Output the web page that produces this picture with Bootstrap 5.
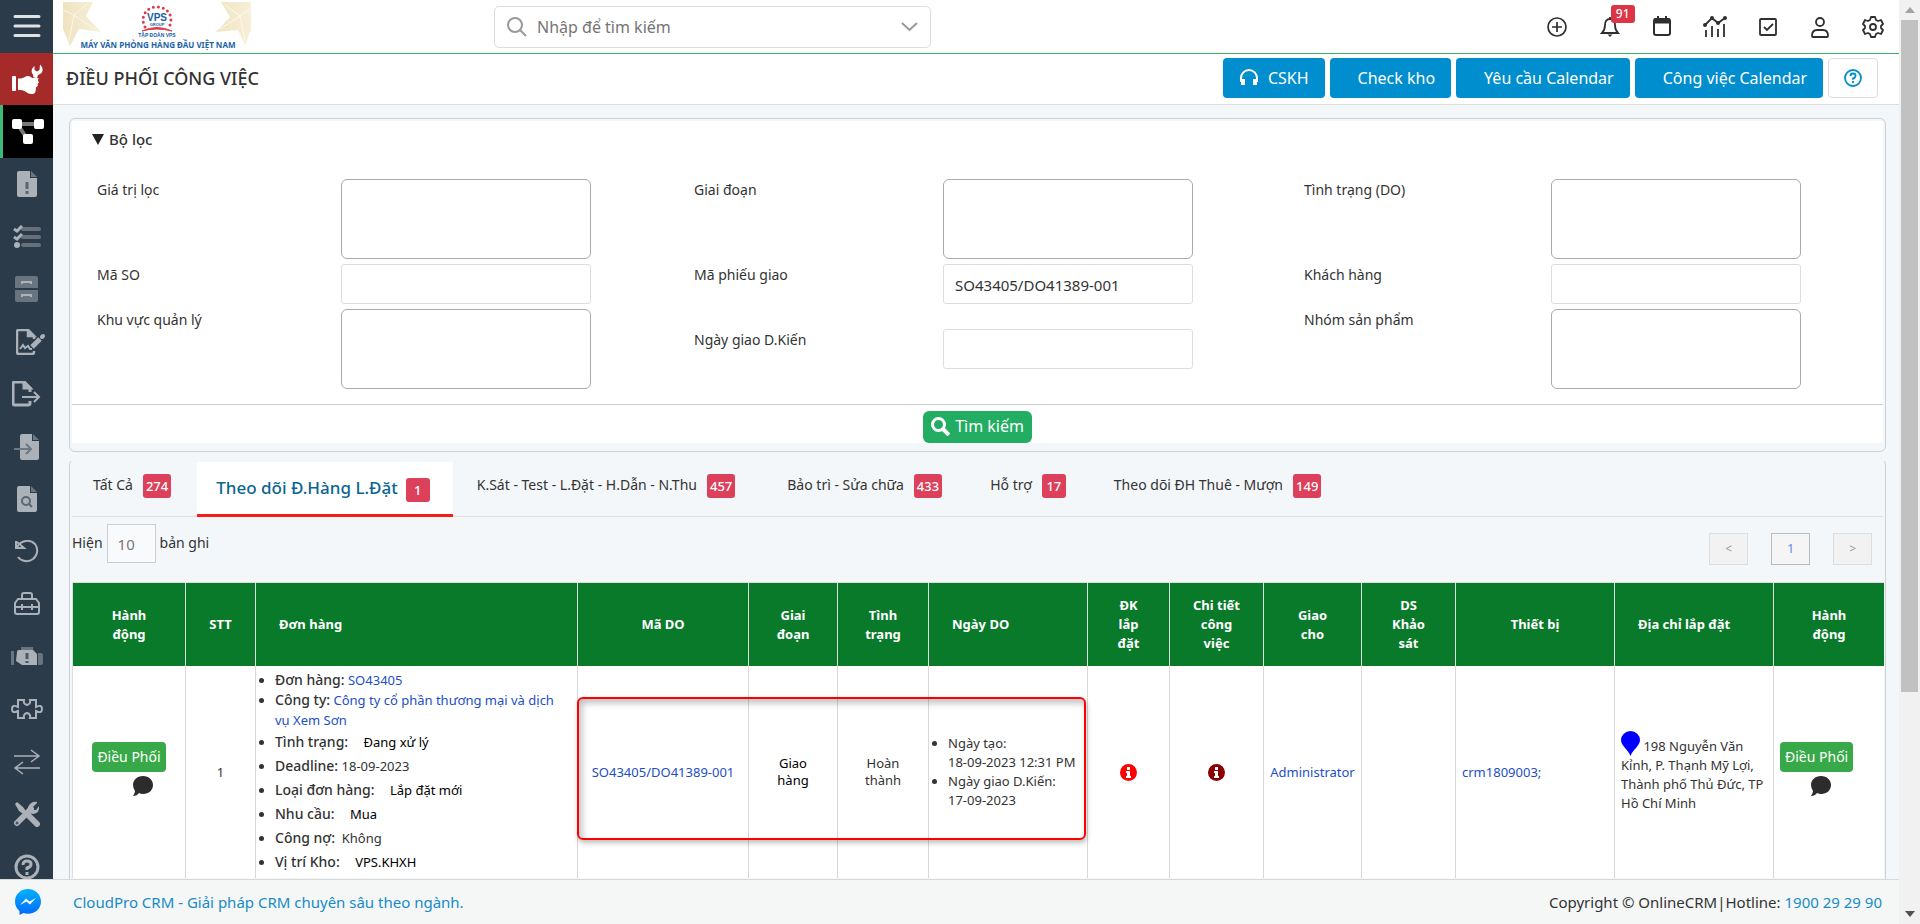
<!DOCTYPE html>
<html lang="vi">
<head>
<meta charset="utf-8">
<meta name="viewport" content="width=device-width, initial-scale=1">
<title>Điều phối công việc</title>
<link href="https://cdn.jsdelivr.net/npm/bootstrap@5.3.0/dist/css/bootstrap.min.css" rel="stylesheet">
<style>
  body { font-family: "Noto Sans", "Open Sans", sans-serif; font-size: 14px; line-height: 20px; color: #333; background: #f3f7fa; overflow: hidden; }
  a { text-decoration: none; }
  svg { display: block; flex: none; }
  .min-0 { min-width: 0; min-height: 0; }

  /* left menu */
  .side { width: 53px; background: #2c3b49; color: #abb1b8; overflow: hidden; }
  .side a, .side button { flex: none; height: 52px; margin-bottom: 1px; display: flex; align-items: center; justify-content: center; color: inherit; background: none; border: 0; padding: 0; }
  .side a:nth-of-type(even) { margin-bottom: 0; }
  .side .is-module { background: #a52a2a; color: #fff; margin-bottom: 0; }
  .side .is-current { background: #000; color: #fff; border-left: 3px solid #3cb878; height: 53px; }

  /* top bars */
  .topbar { height: 54px; background: #fff; border-bottom: 1px solid #3cb371; padding: 0 12px 0 10px; }
  .logo-box { width: 431px; }
  .search-box { width: 437px; height: 42px; border: 1px solid #ddd; border-radius: 5px; color: #999; padding: 0 12px; }
  .search-box input { border: 0; outline: 0; font-size: 16px; color: #757575; min-width: 0; background: none; }
  .search-box input::placeholder { color: #757575; }
  .top-icons { width: 344px; color: #2f2f2f; }
  .top-icons button { border: 0; padding: 0; background: none; color: inherit; width: 28px; height: 28px; display: flex; align-items: center; justify-content: center; position: relative; }
  .bell-count { position: absolute; left: 15px; top: -8px; width: 24px; height: 18px; border-radius: 3px; background: #dc3545; color: #fff; font-size: 12px; line-height: 18px; font-weight: 500; }
  .titlebar { height: 51px; background: #fff; border-bottom: 1px solid #ddd; padding: 0 21px 2px 13px; }
  .titlebar h1 { font-size: 18px; line-height: 24px; font-weight: 500; margin: 0; }
  .tool-row { gap: 5px; }
  .btn-tool { height: 40px; background: #008ecf; color: #fff; border: 0; border-radius: 4px; font-size: 16px; line-height: 24px; padding: 0 16px; display: flex; align-items: center; gap: 9px; }
  .btn-tool.no-icon { padding-left: 28px; }
  .btn-help { width: 50px; height: 40px; background: #fff; border: 1px solid #ddd; border-radius: 4px; color: #008ecf; display: flex; align-items: center; justify-content: center; padding: 0; }

  /* panels */
  .content-area { padding: 13px 13px 0 16px; }
  .panel { border: 1px solid #ccd1d4; border-radius: 6px; background: #f3f7fa; padding: 2px; }
  .filter-panel { padding-bottom: 8px; }
  .filter-body { background: #fff; }
  .filter-body summary { font-size: 15px; line-height: 20px; font-weight: 500; padding: 8px 0 10px 20px; list-style: none; display: flex; align-items: center; gap: 5px; }
  .filter-grid { display: grid; grid-template-columns: 244fr 353fr 249fr 361fr 247fr 332fr; grid-template-rows: 85px 45px 80px; padding: 20px 0 15px 25px; }
  .filter-grid label { padding-top: 1px; }
  .filter-grid input { width: 250px; height: 40px; border: 1px solid #ddd; border-radius: 3px; font-size: 15px; color: #333; padding: 2px 11px 0; }
  .filter-grid textarea { width: 250px; height: 80px; border: 1px solid #aaa; border-radius: 6px; resize: none; display: block; }
  .filter-grid .mid { margin-top: 20px; }
  .filter-foot { border-top: 1px solid #ccc; padding-top: 6px; }
  .btn-find { height: 32px; background: #22ad62; color: #fff; border: 0; border-radius: 6px; font-size: 16px; line-height: 24px; padding: 0 8px 2px; display: flex; align-items: center; gap: 5px; }

  /* list panel */
  .list-panel { margin-top: 7px; border-bottom: 0; border-radius: 6px 6px 0 0; border-top-color: #f3f7fa; }
  .tab-row { border-bottom: 1px solid #ddd; height: 55px; padding-left: 21px; }
  .tab-row a { color: #333; display: flex; gap: 10px; padding: 12px 0 0; height: 55px; line-height: 22px; margin-right: 48px; }
  .tab-row a:first-child { margin-right: 26px; }
  .tab-row a.on { background: #fff; border-bottom: 3px solid #fb1a1a; color: #0b6592; font-weight: 500; font-size: 17px; line-height: 28px; padding: 12px 23px 0 19px; margin-right: 24px; gap: 8px; }
  .tab-row a:nth-child(3) { margin-right: 52px; }
  .tab-count { flex: none; height: 24px; min-width: 24px; padding: 0 3px; border-radius: 3px; background: #dc405b; color: #fff; font-size: 13px; line-height: 24px; font-weight: 500; text-align: center; }
  .on .tab-count { margin-top: 4px; }
  .list-tools { height: 65px; padding-bottom: 1px; }
  .page-size { width: 49px; height: 39px; border: 1px solid #ccc; background: #f9fafb; font-size: 15px; color: #777; padding: 2px 10px 0; }
  .pager { gap: 23px; padding-right: 11px; }
  .pager button { width: 39px; height: 32px; border: 1px solid #ddd; background: #f2f2f2; color: #999; font-size: 12px; line-height: 18px; padding: 0; }
  .pager button.now { border-color: #bbb; background: #f5f5f5; color: #5c86ee; }

  .jobs { width: 100%; table-layout: fixed; border-collapse: separate; border-spacing: 0; font-size: 13px; line-height: 19px; background: #fff; border-left: 1px solid #ddd; }
  .jobs th { background: #09792a; color: #fff; font-weight: 700; text-align: center; height: 84px; padding: 0 16px; border-right: 1px solid #ddd; border-top: 1px solid #ddd; line-height: 19px; }
  .jobs th.start { text-align: left; padding-left: 23px; }
  .jobs td { height: 212px; border-right: 1px solid #d8d8d8; text-align: center; vertical-align: middle; padding: 0 9px; }
  .jobs th:last-child, .jobs td:last-child { border-right: 0; }
  .jobs td.start { text-align: left; padding: 0 6px; }
  .jobs td.bullets { text-align: left; padding: 0 0 0 1px; }
  .jobs a { color: #1c4fc4; }
  .jobs .ink { color: #000; line-height: 17px; }
  .jobs ul { padding-left: 18px; margin: 0; }
  .jobs .narrow { line-height: 17px; }
  .jobs .order-list { padding-right: 20px; }
  .order-list b { font-weight: 500; font-size: 14px; }
  .order-list li { line-height: 20px; padding: 2px 0; }
  .order-list li.tight { padding: 0; }
  .order-list .gap { margin-left: 12px; color: #000; }
  .btn-job { display: block; background: #38a948; color: #fff; border: 0; border-radius: 4px; height: 30px; font-size: 14px; line-height: 20px; padding: 0 5px; white-space: nowrap; }
  .job-note { margin: 4px auto 6px; }
  .marker { left: 27.9%; width: 28.1%; top: 115px; height: 143px; border: 2px solid #f00; border-radius: 6px; box-shadow: 1px 3px 5px rgba(0,0,0,.25), inset 3px 4px 7px rgba(0,0,0,.25); pointer-events: none; }

  .foot { height: 45px; flex: none; background: #f5f7f7; border-top: 1px solid #d8d9da; font-size: 15px; padding: 0 17px 0 15px; }
  .foot a { color: #178bc6; }

  /* page scroll bar */
  .bar { width: 21px; flex: none; background: #f1f1f1; padding: 0 2px; }
  .bar-end { height: 20px; }
  .bar-thumb { background: #c1c1c1; flex: 0 0 76%; }
</style>
</head>
<body class="d-flex vh-100">
<div class="d-flex flex-column flex-grow-1 min-0">
  <div class="d-flex flex-grow-1 min-0">

    <nav class="side d-flex flex-column flex-shrink-0" aria-label="Menu">
      <button type="button" aria-label="Mở menu"><svg width="28" height="24" stroke="#dfe2e5" stroke-width="3" stroke-linecap="round"><path d="M2 2.500h24M2 12h24M2 21.500h24"/></svg></button>
      <a href="#" class="is-module" aria-label="Dịch vụ"><svg width="32" height="32" viewBox="0 0 32 32" fill="currentColor"><rect x="1" y="13" width="4" height="15" rx="1"/><path d="M7 15.500h2c4 0 5-2.500 8-2.500 2 0 3 1 4 2h6.500l-.5 3 1 1-1.500 2.500.5 1-2 2-.5 4c-.5 2-2 2.500-4 2.500-5 0-6-4-11-4H7z"/><path d="M22.500 14.500l-.5-3c-2-2-2-6 1.500-8.500V7l2.500 1.500L28.500 7 29 1.500c3 2.500 3.500 6.500 1 9l-3 1.500-1 3z"/></svg></a>
      <a href="#" class="is-current" aria-label="Điều phối"><svg width="32" height="26" viewBox="0 0 32 26"><path d="M5 5h22M6 6l10 15" stroke="#777" stroke-width="4"/><rect x="0" y="0" width="10" height="10" rx="2" fill="#fff"/><rect x="22" y="0" width="10" height="10" rx="2" fill="#fff"/><rect x="11" y="15" width="10" height="10" rx="2" fill="#fff"/></svg></a>
      <a href="#" aria-label="Cảnh báo"><svg width="20" height="26" viewBox="0 0 20 26" fill="currentColor"><path d="M2 0h11v7h7v17q0 2-2 2H2q-2 0-2-2V2q0-2 2-2z"/><path d="M14 0l6 6h-6z" opacity=".5"/><path d="M10 11v7M10 20v3" stroke="#5b6671" stroke-width="3"/></svg></a>
      <a href="#" aria-label="Danh sách"><svg width="28" height="24" viewBox="0 0 28 24" fill="none" stroke="currentColor"><path d="M10 4h16M10 12h16M10 20h16" stroke-width="4" stroke-linecap="round" opacity=".45"/><path d="M1 4l3 2 5-5M1 12l3 2 5-5" stroke-width="3"/><circle cx="4" cy="20" r="3" fill="currentColor" stroke="none"/></svg></a>
      <a href="#" aria-label="Kho"><svg width="23" height="26" viewBox="0 0 23 26"><path d="M2 0h19q2 0 2 2v10H0V2q0-2 2-2zM0 14h23v10q0 2-2 2H2q-2 0-2-2z" fill="#68747f"/><path d="M7 8V6h9v2M7 21v-2h9v2" fill="none" stroke="currentColor" stroke-width="2"/></svg></a>
      <a href="#" aria-label="Hợp đồng"><svg class="ms-2" width="29" height="26" viewBox="0 0 29 26" fill="none" stroke="currentColor" stroke-width="2.500"><path d="M18 22v1q0 2-2 2H3q-2 0-2-2V3q0-2 2-2h9l6 6v3"/><path d="M12 1v6h6z" fill="currentColor"/><path d="M4 20l3-4 2 3 3-2 2 3h2" stroke-width="2"/><path d="M16 18L24 10" stroke-width="5"/><path d="M26 8l1-1" stroke-width="4" stroke-linecap="round"/></svg></a>
      <a href="#" aria-label="Xuất"><svg width="29" height="26" viewBox="0 0 29 26" fill="none" stroke="currentColor" stroke-width="3"><path d="M18 20v2q0 2-2 2H3q-2 0-2-2V3q0-2 2-2h9l6 6v4"/><path d="M12 1v6h6z" fill="currentColor"/><path d="M10 16h17M22 11l5 5-5 5" stroke-width="2"/></svg></a>
      <a href="#" aria-label="Nhập"><svg width="27" height="26" viewBox="0 0 27 26"><path d="M9 0h10v7h7v17q0 2-2 2H9q-2 0-2-2V2q0-2 2-2z" fill="currentColor"/><path d="M20 0l6 6h-6z" fill="currentColor" opacity=".5"/><path d="M1 15h17M13 10l5 5-5 5" fill="none" stroke="#6c7781" stroke-width="2"/></svg></a>
      <a href="#" aria-label="Tra cứu"><svg width="20" height="26" viewBox="0 0 20 26"><path d="M2 0h11v7h7v17q0 2-2 2H2q-2 0-2-2V2q0-2 2-2z" fill="currentColor"/><path d="M14 0l6 6h-6z" fill="currentColor" opacity=".5"/><circle cx="9" cy="15" r="4" fill="none" stroke="#5b6671" stroke-width="2"/><path d="M12 18l3 3" stroke="#5b6671" stroke-width="2"/></svg></a>
      <a href="#" aria-label="Thu hồi"><svg width="24" height="24" viewBox="0 0 24 24" fill="none" stroke="currentColor" stroke-width="2"><path d="M2 7C6 0 15-1 20 4a10.500 10.500 0 0 1-17 13M1 1v7h8L2 2"/></svg></a>
      <a href="#" aria-label="Công cụ"><svg width="26" height="24" viewBox="0 0 26 24" fill="none" stroke="currentColor" stroke-width="2"><path d="M4 7h18l3 4v9q0 2-2 2H3q-2 0-2-2v-9zM8 7V3q0-2 2-2h6q2 0 2 2v4M1 15h24M8 12v6M18 12v6"/></svg></a>
      <a href="#" aria-label="Máy móc"><svg width="32" height="20" viewBox="0 0 32 20"><path d="M0 4h3v14H0zM27 6h3q2 0 2 2v8q0 2-2 2h-3zM10 0h12v3H10z" fill="#68747f"/><path d="M6 5q0-2 2-2h14l4 4v11H11l-6-4z" fill="currentColor"/><path d="M16 6v6M16 14v2" stroke="#4c5864" stroke-width="3"/></svg></a>
      <a href="#" aria-label="Tiện ích"><svg width="32" height="20" viewBox="0 0 32 20" fill="none" stroke="currentColor" stroke-width="2"><path d="M7 8V1h6q-1 4 3 5 4-1 3-5h6v7q6-3 6 2t-6 2v7h-6q1-4-3-5-4 1-3 5H7v-7q-6 3-6-2t6-2z"/></svg></a>
      <a href="#" aria-label="Chuyển đổi"><svg width="28" height="26" viewBox="0 0 28 26" fill="none" stroke="currentColor" stroke-width="1.500"><path d="M1 7h25M18 1l8 6-8 6M27 19H2M10 13l-8 6 8 6"/></svg></a>
      <a href="#" aria-label="Sửa chữa"><svg width="27" height="26" viewBox="0 0 27 26" fill="none" stroke="currentColor"><path d="M4 22L18 8" stroke-width="6" stroke-linecap="round"/><path d="M24 2l-4 4 0 3 3 0 3-4q1 7-6 8-7-1-5-7 3-6 9-5z" fill="currentColor" stroke="none"/><path d="M2 3l2-2 6 5 5 7-2 2-7-5z" fill="currentColor" stroke="none"/><path d="M16 15l8 8" stroke-width="6" stroke-linecap="round"/><circle cx="4" cy="22" r="1" stroke="#2c3b49"/></svg></a>
      <a href="#" aria-label="Trợ giúp"><svg width="26" height="26" viewBox="0 0 26 26" fill="none" stroke="currentColor" stroke-width="3"><circle cx="13" cy="13" r="11"/><path d="M9 11q0-4 4-4t4 3-4 4v2M13 18v3"/></svg></a>
    </nav>

    <div class="d-flex flex-column flex-grow-1 min-0">
      <header class="topbar d-flex align-items-center flex-shrink-0">
        <a href="#" class="logo-box flex-shrink-1" aria-label="Tập đoàn VPS">
          <svg width="190" height="50" viewBox="0 0 190 50">
            <defs><linearGradient id="gold"><stop offset="0" stop-color="#efe3c0"/><stop offset="1" stop-color="#f7efd8"/></linearGradient></defs>
            <path d="M0 0h30l-7 14 15 16-22-3-9 17L0 27z" fill="url(#gold)"/><path d="M11 13L24 2M11 13l22 15M11 13L0 8M11 13L6 38" stroke="#fbf7ea" stroke-width="1"/>
            <path d="M158 0h30v28l-6 15-7-15-22 2 14-15z" fill="url(#gold)"/><path d="M177 14L162 3M177 14l-20 13M177 14l11-8M177 14l5 26" stroke="#fdfaf0" stroke-width="1"/>
            <path d="M82 25c-5-9 0-20 12-20s17 11 12 20" fill="none" stroke="#dc3a4a" stroke-width="3" stroke-linecap="round" stroke-dasharray="0 5"/>
            <text x="94" y="19" text-anchor="middle" font-family="Liberation Sans, sans-serif" font-weight="700" font-size="10" fill="#155fa6">VPS</text>
            <text x="94" y="24" text-anchor="middle" font-family="Liberation Sans, sans-serif" font-weight="700" font-size="4" fill="#155fa6">GROUP</text>
            <path d="M79 29q15-7 30 0-15-4-30 0z" fill="#dc3a4a" stroke="#dc3a4a"/>
            <text x="94" y="35" text-anchor="middle" font-family="Liberation Sans, sans-serif" font-weight="700" font-size="5" fill="#155fa6">TẬP ĐOÀN VPS</text>
            <text x="95" y="46" text-anchor="middle" font-family="Noto Sans, sans-serif" font-weight="700" font-size="8" fill="#1a63a5">MÁY VĂN PHÒNG HÀNG ĐẦU VIỆT NAM</text>
          </svg>
        </a>
        <div class="search-box d-flex align-items-center gap-2 me-auto">
          <svg width="20" height="20" viewBox="0 0 20 20" fill="none" stroke="currentColor" stroke-width="2"><circle cx="8" cy="8" r="7"/><path d="M13 13l6 6"/></svg>
          <input type="search" class="flex-grow-1" placeholder="Nhập để tìm kiếm" aria-label="Nhập để tìm kiếm">
          <svg width="17" height="10" viewBox="0 0 17 10" fill="none" stroke="currentColor" stroke-width="2"><path d="M1 1l7.500 7L16 1"/></svg>
        </div>
        <div class="top-icons d-flex justify-content-between">
          <button type="button" aria-label="Thêm"><svg width="20" height="20" viewBox="0 0 20 20" fill="none" stroke="currentColor" stroke-width="1.700"><circle cx="10" cy="10" r="9"/><path d="M10 5v10M5 10h10"/></svg></button>
          <button type="button" aria-label="Thông báo"><svg width="20" height="20" viewBox="0 0 20 20" fill="none" stroke="currentColor" stroke-width="1.800"><path d="M2 16q3-3 3-8 0-6 5-6t5 6q0 5 3 8zM10 0v2"/><path d="M7.500 17.500h5L10 20z" fill="currentColor" stroke="none"/></svg><span class="bell-count">91</span></button>
          <button type="button" aria-label="Lịch"><svg width="20" height="21" viewBox="0 0 20 21" fill="none" stroke="currentColor" stroke-width="2"><rect x="2" y="3" width="16" height="16" rx="2"/><path d="M2 5h16" stroke-width="5"/><path d="M6 0v5M14 0v5"/></svg></button>
          <button type="button" aria-label="Báo cáo"><svg width="24" height="22" viewBox="0 0 24 22" fill="none" stroke="currentColor" stroke-width="1.800"><path d="M2 9l7-7 6 5 7-5M3 14v7M9 10v11M15 13v8M21 8v13"/><g fill="currentColor" stroke="none"><circle cx="2" cy="9" r="2"/><circle cx="9" cy="2" r="2"/><circle cx="15" cy="7" r="2"/><circle cx="22" cy="2" r="2"/></g></svg></button>
          <button type="button" aria-label="Công việc"><svg width="20" height="20" viewBox="0 0 20 20" fill="none" stroke="currentColor" stroke-width="1.800"><rect x="2" y="2" width="16" height="16" rx="1"/><path d="M6 10l3 3 6-6"/></svg></button>
          <button type="button" aria-label="Tài khoản"><svg width="20" height="22" viewBox="0 0 20 22" fill="none" stroke="currentColor" stroke-width="1.800"><circle cx="10" cy="6" r="4"/><path d="M2 20q0-6 5-6h6q5 0 5 6 0 1-1 1H3q-1 0-1-1z"/></svg></button>
          <button type="button" aria-label="Cài đặt"><svg width="22" height="22" viewBox="0 0 22 22" fill="none" stroke="currentColor" stroke-width="1.800" stroke-linejoin="round"><path d="M9 1h4l1 3 2 1 3-1 2 4-2 2v2l2 2-2 4-3-1-2 1-1 3H9l-1-3-2-1-3 1-2-4 2-2v-2L1 8l2-4 3 1 2-1z"/><circle cx="11" cy="11" r="3"/></svg></button>
        </div>
      </header>

      <div class="titlebar d-flex align-items-center justify-content-between flex-shrink-0">
        <h1>ĐIỀU PHỐI CÔNG VIỆC</h1>
        <div class="tool-row d-flex">
          <button type="button" class="btn-tool"><svg width="20" height="18" viewBox="0 0 20 18" fill="none" stroke="currentColor" stroke-width="2"><path d="M2 13V9a8 8 0 0 1 16 0v4"/><path d="M4 10v6M16 10v6" stroke-width="4"/></svg>CSKH</button>
          <button type="button" class="btn-tool no-icon">Check kho</button>
          <button type="button" class="btn-tool no-icon">Yêu cầu Calendar</button>
          <button type="button" class="btn-tool no-icon">Công việc Calendar</button>
          <button type="button" class="btn-help" aria-label="Trợ giúp"><svg width="18" height="18" viewBox="0 0 18 18" fill="none" stroke="currentColor" stroke-width="1.800"><circle cx="9" cy="9" r="8"/><path d="M6.500 7q0-2.500 2.500-2.500t2.500 2.200-2.500 2.800v1.200M9 12v2"/></svg></button>
        </div>
      </div>

      <main class="content-area flex-grow-1 min-0 overflow-hidden">
        <section class="panel filter-panel">
          <details class="filter-body" open>
            <summary><svg width="12" height="11"><path d="M0 0h12L6 11z" fill="#222"/></svg>Bộ lọc</summary>
            <form>
              <div class="filter-grid">
                <label for="f1">Giá trị lọc</label><div><textarea id="f1"></textarea></div>
                <label for="f2">Giai đoạn</label><div><textarea id="f2"></textarea></div>
                <label for="f3">Tình trạng (DO)</label><div><textarea id="f3"></textarea></div>
                <label for="f4">Mã SO</label><div><input id="f4" type="text"></div>
                <label for="f5">Mã phiếu giao</label><div><input id="f5" type="text" value="SO43405/DO41389-001"></div>
                <label for="f6">Khách hàng</label><div><input id="f6" type="text"></div>
                <label for="f7">Khu vực quản lý</label><div><textarea id="f7"></textarea></div>
                <label for="f8" class="mid">Ngày giao D.Kiến</label><div class="mid"><input id="f8" type="text"></div>
                <label for="f9">Nhóm sản phẩm</label><div><textarea id="f9"></textarea></div>
              </div>
              <div class="filter-foot d-flex justify-content-center">
                <button type="button" class="btn-find"><svg width="19" height="19" viewBox="0 0 19 19" fill="none" stroke="currentColor" stroke-width="3"><circle cx="7.500" cy="7.500" r="6"/><path d="M12 12l6 6" stroke-width="4"/></svg>Tìm kiếm</button>
              </div>
            </form>
          </details>
        </section>

        <section class="panel list-panel">
          <nav class="tab-row d-flex" aria-label="Loại công việc">
            <a href="#">Tất Cả <span class="tab-count">274</span></a>
            <a href="#" class="on">Theo dõi Đ.Hàng L.Đặt <span class="tab-count">1</span></a>
            <a href="#">K.Sát - Test - L.Đặt - H.Dẫn - N.Thu <span class="tab-count">457</span></a>
            <a href="#">Bảo trì - Sửa chữa <span class="tab-count">433</span></a>
            <a href="#">Hỗ trợ <span class="tab-count">17</span></a>
            <a href="#">Theo dõi ĐH Thuê - Mượn <span class="tab-count">149</span></a>
          </nav>
          <div class="list-tools d-flex justify-content-between">
            <div class="d-flex align-items-center gap-1 pb-2 mb-1"><label for="size">Hiện</label><input id="size" class="page-size" type="text" value="10"><span>bản ghi</span></div>
            <div class="pager d-flex align-items-center"><button type="button" aria-label="Trang trước">&lt;</button><button type="button" class="now">1</button><button type="button" aria-label="Trang sau">&gt;</button></div>
          </div>
          <div class="position-relative">
            <table class="jobs">
              <colgroup><col width="113"><col width="70"><col width="322"><col width="171"><col width="89"><col width="91"><col width="159"><col width="82"><col width="94"><col width="98"><col width="94"><col width="159"><col width="159"><col width="110"></colgroup>
              <thead><tr><th>Hành<br>động</th><th>STT</th><th class="start">Đơn hàng</th><th>Mã DO</th><th>Giai<br>đoạn</th><th>Tình<br>trạng</th><th class="start">Ngày DO</th><th>ĐK<br>lắp<br>đặt</th><th>Chi tiết<br>công<br>việc</th><th>Giao<br>cho</th><th>DS<br>Khảo<br>sát</th><th>Thiết bị</th><th class="start">Địa chỉ lắp đặt</th><th>Hành<br>động</th></tr></thead>
              <tbody><tr>
                <td><button type="button" class="btn-job mx-auto">Điều Phối</button><div class="ps-4 ms-1"><svg class="job-note" width="22" height="20" viewBox="0 0 22 20"><path d="M11 0c6 0 10 4 10 9s-4 9-10 9q-2 0-4-1-2 3-6 3 2-3 2-5-2-3-2-6C1 4 5 0 11 0z" fill="#2c2c2c"/></svg></div></td>
                <td>1</td>
                <td class="bullets"><ul class="order-list">
                  <li class="tight"><b>Đơn hàng:</b> <a href="#">SO43405</a></li>
                  <li class="tight"><b>Công ty:</b> <a href="#">Công ty cổ phần thương mại và dịch vụ Xem Sơn</a></li>
                  <li><b>Tình trạng:</b> <span class="gap">Đang xử lý</span></li>
                  <li><b>Deadline:</b> 18-09-2023</li>
                  <li><b>Loại đơn hàng:</b> <span class="gap">Lắp đặt mới</span></li>
                  <li><b>Nhu cầu:</b> <span class="gap">Mua</span></li>
                  <li><b>Công nợ:</b>&nbsp; Không</li>
                  <li><b>Vị trí Kho:</b> <span class="gap">VPS.KHXH</span></li>
                </ul></td>
                <td><a href="#">SO43405/DO41389-001</a></td>
                <td class="ink px-4">Giao hàng</td>
                <td class="narrow px-4">Hoàn thành</td>
                <td class="bullets"><ul class="text-nowrap"><li>Ngày tạo:<br>18-09-2023 12:31 PM</li><li>Ngày giao D.Kiến:<br>17-09-2023</li></ul></td>
                <td><svg class="mx-auto" width="17" height="17" viewBox="0 0 17 17"><circle cx="8.500" cy="8.500" r="8.500" fill="#f00"/><path d="M7 3h3v3H7zM6 7h4v5h1v2H6v-2h1V9H6z" fill="#fff"/></svg></td>
                <td><svg class="mx-auto" width="17" height="17" viewBox="0 0 17 17"><circle cx="8.500" cy="8.500" r="8.500" fill="#8b0000"/><path d="M7 3h3v3H7zM6 7h4v5h1v2H6v-2h1V9H6z" fill="#fff"/></svg></td>
                <td class="px-0"><a href="#">Administrator</a></td>
                <td></td>
                <td class="start"><a href="#">crm1809003;</a></td>
                <td class="start"><svg class="d-inline-block align-bottom" width="19" height="25" viewBox="0 0 19 25"><path d="M9.500 25C7 18 0 15 0 9a9.500 9 0 0 1 19 0c0 6-7 9-9.500 16z" fill="#00f"/></svg> 198 Nguyễn Văn Kỉnh, P. Thạnh Mỹ Lợi, Thành phố Thủ Đức, TP Hồ Chí Minh</td>
                <td class="start"><div class="d-inline-block align-middle"><button type="button" class="btn-job">Điều Phối</button><div class="ps-2"><svg class="job-note" width="22" height="20" viewBox="0 0 22 20"><path d="M11 0c6 0 10 4 10 9s-4 9-10 9q-2 0-4-1-2 3-6 3 2-3 2-5-2-3-2-6C1 4 5 0 11 0z" fill="#2c2c2c"/></svg></div></div></td>
              </tr></tbody>
            </table>
            <div class="marker position-absolute"></div>
          </div>
        </section>
      </main>
    </div>
  </div>

  <footer class="foot d-flex align-items-center">
    <a href="#" aria-label="Messenger"><svg width="26" height="26" viewBox="0 0 26 26"><defs><linearGradient id="msg" x2="0" y2="1"><stop offset="0" stop-color="#00b2ff"/><stop offset="1" stop-color="#006aff"/></linearGradient></defs><path d="M13 0C5.500 0 0 5.500 0 12.500c0 4 1.500 7 4.500 9.500v4l4-2q2 .8 4.500.8c7.500 0 13-5.500 13-12.300S20.500 0 13 0z" fill="url(#msg)"/><path d="M5 16l6-6.500 3.500 3L21 9l-6 6.500-3.500-3z" fill="#fff"/></svg></a>
    <a href="#" class="me-auto ms-3 ps-3">CloudPro CRM - Giải pháp CRM chuyên sâu theo ngành.</a>
    <span>Copyright © OnlineCRM|Hotline: <a href="tel:1900292990">1900 29 29 90</a></span>
  </footer>
</div>
<div class="bar d-flex flex-column" aria-hidden="true">
  <div class="bar-end d-flex align-items-center justify-content-center"><svg width="10" height="6"><path d="M5 0l5 6H0z" fill="#a3a3a3"/></svg></div>
  <div class="d-flex flex-column flex-grow-1"><div class="bar-thumb"></div></div>
  <div class="bar-end d-flex align-items-center justify-content-center"><svg width="10" height="6"><path d="M5 6L0 0h10z" fill="#505050"/></svg></div>
</div>
<script src="https://cdn.jsdelivr.net/npm/bootstrap@5.3.0/dist/js/bootstrap.bundle.min.js"></script>
</body>
</html>
